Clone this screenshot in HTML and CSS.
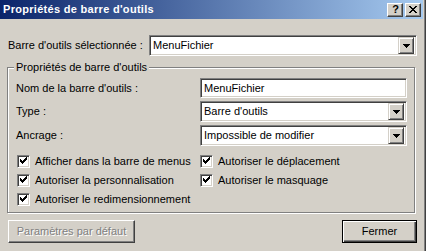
FILE: index.html
```html
<!DOCTYPE html>
<html lang="fr">
<head>
<meta charset="utf-8">
<title>Propriétés de barre d'outils</title>
<link rel="stylesheet" href="styles.css">
</head>
<body>
<div class="window">
  <div class="titlebar">
    <span class="title">Propriétés de barre d'outils</span>
    <div class="tb-buttons">
      <span class="tb-btn help">?</span>
      <span class="tb-btn close"><svg width="8" height="7" viewBox="0 0 8 7" shape-rendering="crispEdges"><path d="M0 0h2v1h-2zM6 0h2v1h-2zM1 1h2v1h-2zM5 1h2v1h-2zM2 2h4v1h-4zM3 3h2v1h-2zM2 4h4v1h-4zM1 5h2v1h-2zM5 5h2v1h-2zM0 6h2v1h-2zM6 6h2v1h-2z" fill="#000"/></svg></span>
    </div>
  </div>
  <div class="content">
    <div class="top-row">
      <span class="lbl">Barre d'outils sélectionnée :</span>
      <div class="combo combo-wide">
        <span class="combo-text">MenuFichier</span>
        <span class="drop-btn"><svg width="7" height="4" viewBox="0 0 7 4" shape-rendering="crispEdges"><path d="M0 0h7v1h-7zM1 1h5v1h-5zM2 2h3v1h-3zM3 3h1v1h-1z" fill="#000"/></svg></span>
      </div>
    </div>
    <fieldset class="group">
      <legend class="group-title">Propriétés de barre d'outils</legend>
      <div class="form-grid">
        <span class="lbl">Nom de la barre d'outils :</span>
        <div class="field"><span class="combo-text">MenuFichier</span></div>
        <span class="lbl">Type :</span>
        <div class="combo">
          <span class="combo-text">Barre d'outils</span>
          <span class="drop-btn"><svg width="7" height="4" viewBox="0 0 7 4" shape-rendering="crispEdges"><path d="M0 0h7v1h-7zM1 1h5v1h-5zM2 2h3v1h-3zM3 3h1v1h-1z" fill="#000"/></svg></span>
        </div>
        <span class="lbl">Ancrage :</span>
        <div class="combo">
          <span class="combo-text">Impossible de modifier</span>
          <span class="drop-btn"><svg width="7" height="4" viewBox="0 0 7 4" shape-rendering="crispEdges"><path d="M0 0h7v1h-7zM1 1h5v1h-5zM2 2h3v1h-3zM3 3h1v1h-1z" fill="#000"/></svg></span>
        </div>
      </div>
      <div class="checks">
        <div class="check"><span class="box"><svg width="9" height="9" viewBox="0 0 9 9" shape-rendering="crispEdges"><path d="M1 2h1v3h-1zM2 3h1v3h-1zM3 4h1v3h-1zM4 3h1v3h-1zM5 2h1v3h-1zM6 1h1v3h-1zM7 0h1v3h-1z" fill="#000"/></svg></span><span>Afficher dans la barre de menus</span></div>
        <div class="check"><span class="box"><svg width="9" height="9" viewBox="0 0 9 9" shape-rendering="crispEdges"><path d="M1 2h1v3h-1zM2 3h1v3h-1zM3 4h1v3h-1zM4 3h1v3h-1zM5 2h1v3h-1zM6 1h1v3h-1zM7 0h1v3h-1z" fill="#000"/></svg></span><span>Autoriser le déplacement</span></div>
        <div class="check"><span class="box"><svg width="9" height="9" viewBox="0 0 9 9" shape-rendering="crispEdges"><path d="M1 2h1v3h-1zM2 3h1v3h-1zM3 4h1v3h-1zM4 3h1v3h-1zM5 2h1v3h-1zM6 1h1v3h-1zM7 0h1v3h-1z" fill="#000"/></svg></span><span>Autoriser la personnalisation</span></div>
        <div class="check"><span class="box"><svg width="9" height="9" viewBox="0 0 9 9" shape-rendering="crispEdges"><path d="M1 2h1v3h-1zM2 3h1v3h-1zM3 4h1v3h-1zM4 3h1v3h-1zM5 2h1v3h-1zM6 1h1v3h-1zM7 0h1v3h-1z" fill="#000"/></svg></span><span>Autoriser le masquage</span></div>
        <div class="check"><span class="box"><svg width="9" height="9" viewBox="0 0 9 9" shape-rendering="crispEdges"><path d="M1 2h1v3h-1zM2 3h1v3h-1zM3 4h1v3h-1zM4 3h1v3h-1zM5 2h1v3h-1zM6 1h1v3h-1zM7 0h1v3h-1z" fill="#000"/></svg></span><span>Autoriser le redimensionnement</span></div>
      </div>
    </fieldset>
    <div class="buttons">
      <button class="btn btn-disabled" disabled>Paramètres par défaut</button>
      <button class="btn btn-default">Fermer</button>
    </div>
  </div>
</div>
</body>
</html>
```
FILE: styles.css
```css
* { box-sizing: border-box; margin: 0; padding: 0; }
html, body { background: #d4d0c8; }
body {
  margin: 0;
  font: 11px/13px "Liberation Sans", Arial, sans-serif;
  color: #000;
}
.window {
  width: 426px;
  height: 251px;
  background: #d4d0c8;
  border-right: 1px solid #404040;
  box-shadow: inset -1px 0 #808080;
  padding-right: 2px;
  overflow: hidden;
}
.titlebar {
  height: 19px;
  display: flex;
  align-items: center;
  justify-content: space-between;
  background: linear-gradient(to right, #0a246a, #a6caf0);
  padding: 0 2px 0 3px;
}
.title {
  color: #fff;
  font-weight: bold;
  font-size: 11px;
  letter-spacing: 0.3px;
  white-space: nowrap;
}
.tb-buttons { display: flex; gap: 2px; }
.tb-btn {
  width: 16px;
  height: 14px;
  background: #d4d0c8;
  border: 1px solid;
  border-color: #fff #404040 #404040 #fff;
  box-shadow: inset -1px -1px #808080;
  display: flex;
  align-items: center;
  justify-content: center;
  font-weight: bold;
  font-size: 11px;
  line-height: 1;
}
.help { padding-left: 1px; }
.content { padding: 16px 6px 0 8px; }
.top-row {
  display: flex;
  align-items: center;
  justify-content: space-between;
}
.lbl { white-space: nowrap; }
.combo, .field {
  display: flex;
  align-items: center;
  background: #fff;
  border: 1px solid;
  border-color: #808080 #fff #fff #808080;
  box-shadow: inset 1px 1px #404040, inset -1px -1px #d4d0c8;
  padding: 2px;
  height: 21px;
}
.field { height: 20px; }
.combo-wide { width: 268px; }
.combo-text { flex: 1; padding-left: 1px; white-space: nowrap; }
.drop-btn {
  width: 16px;
  height: 17px;
  background: #d4d0c8;
  border: 1px solid;
  border-color: #d4d0c8 #404040 #404040 #d4d0c8;
  box-shadow: inset 1px 1px #fff, inset -1px -1px #808080;
  display: flex;
  align-items: center;
  justify-content: center;
}
.drop-btn svg { margin-top: 1px; }
.group {
  margin: 5px 0 0 -1px;
  width: 408px;
  border: 1px solid #808080;
  box-shadow: 1px 1px 0 #fff, inset 1px 1px 0 #fff;
  padding: 4px 8px 3px 8px;
  min-width: 0;
}
.group-title {
  padding: 0 2px;
  margin-left: -2px;
  background: #d4d0c8;
}
.form-grid {
  display: grid;
  grid-template-columns: 184px 207px;
  row-gap: 3px;
  align-items: center;
}
.checks {
  display: grid;
  grid-template-columns: 183px auto;
  grid-auto-rows: 19px;
  margin: 6px 0 0 1px;
}
.check { display: flex; align-items: center; gap: 5px; white-space: nowrap; }
.box {
  width: 13px;
  height: 13px;
  background: #fff;
  border: 1px solid;
  border-color: #808080 #fff #fff #808080;
  box-shadow: inset 1px 1px #404040, inset -1px -1px #d4d0c8;
  display: flex;
  padding: 1px;
  align-items: center;
  justify-content: center;
  flex: none;
}
.box svg { display: block; }
.buttons {
  display: flex;
  justify-content: space-between;
  margin-top: 7px;
}
.btn {
  font: 11px/13px "Liberation Sans", Arial, sans-serif;
  height: 23px;
  background: #d4d0c8;
  border: 1px solid;
  border-color: #fff #404040 #404040 #fff;
  box-shadow: inset -1px -1px #808080;
  color: #000;
}
.btn-disabled {
  width: 127px;
  color: #808080;
  text-shadow: 1px 1px #fff;
}
.btn-default {
  width: 75px;
  border: 1px solid #000;
  box-shadow: inset 1px 1px #fff, inset -1px -1px #404040, inset -2px -2px #808080;
}
```
